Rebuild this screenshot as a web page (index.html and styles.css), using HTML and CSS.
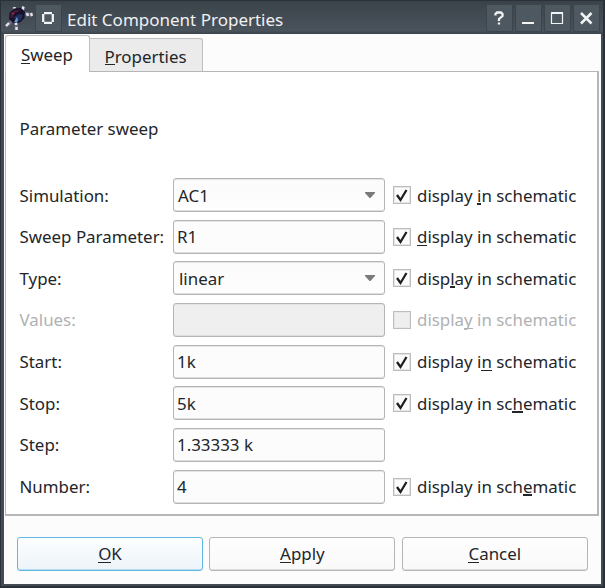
FILE: index.html
```html
<!DOCTYPE html>
<html lang="en">
<head>
<meta charset="utf-8">
<title>Edit Component Properties</title>
<link rel="stylesheet" href="styles.css">
</head>
<body>
<div class="window">
  <header class="titlebar">
    <svg class="app-icon" width="30" height="28" viewBox="0 0 30 28">
      <path d="M9 7 9.500 3M17 7l2-4M18 9l4 1 5 1M11 17l.5 9M7 16l-2 3-4 3" fill="none" stroke="#6e6880" stroke-width="3.400"/>
      <path d="M9.500 3v2M18.500 2.500l-1 3M22 9l1 3M26 9l1 3M11 19v2M11.500 23v3M4 19l-3 3" fill="none" stroke="#e6e2ee" stroke-width="2.400"/>
      <path d="M4.500 9 9 4.500l7-.5 4 4-.5 6-4.500 4.500-7 .5-4-4z" fill="#15122b"/>
      <path d="M6 9l4-3 6 0-7 4-1 4-3 0z" fill="#421937"/>
      <path d="M9 13l5-3 4 1-2 5-5 2z" fill="#22305e"/>
      <path d="M9 18l3-5 1 3-1 3z" fill="#6d92c4"/>
      <path d="M7 10l2-1" stroke="#a72643" stroke-width="1.500"/>
    </svg>
    <span class="tool"><svg width="27" height="28"><path d="M9 9.200h8M9 18.800h8M8.200 10v8M17.800 10v8" stroke="#f2f3f3" stroke-width="2.300" fill="none"/></svg></span>
    <h1>Edit Component Properties</h1>
    <div class="tools">
      <span class="tool"><svg width="27" height="28"><path d="M9.500 11.500V10l1.500-1.500h4L16.500 10v2L13 15v2M13 18.500v2" stroke="#f2f3f3" stroke-width="2.300" fill="none"/></svg></span>
      <span class="tool"><svg width="27" height="28"><path d="M7 19h12" stroke="#f2f3f3" stroke-width="2"/></svg></span>
      <span class="tool"><svg width="27" height="28"><path d="M7.500 9v11M18.500 9v11M7 19.500h12" stroke="#f2f3f3" stroke-width="1.200" fill="none"/><path d="M7 9h12" stroke="#f2f3f3" stroke-width="2"/></svg></span>
      <span class="tool"><svg width="27" height="28"><path d="M8 9 18.500 19.500M18.500 9 8 19.500" stroke="#f2f3f3" stroke-width="2.500"/></svg></span>
    </div>
  </header>
  <main class="content">
    <nav class="tabs">
      <div class="tab active"><span><u>S</u>weep</span></div>
      <div class="tab"><span><u>P</u>roperties</span></div>
    </nav>
    <section class="pane">
      <p class="heading">Parameter sweep</p>
      <div class="form">
        <label class="low">Simulation:</label>
        <div class="field combo editable low">AC1<svg class="arrow" width="10" height="6"><path d="M0 0h10v1L5.500 6h-1L0 1z"/></svg></div>
        <div class="check low"><span class="box"><svg width="18" height="18"><path d="M4 9 7.500 14 13.500 4"/></svg></span><span>display <u class="thick">i</u>n schematic</span></div>

        <label>Sweep Parameter:</label>
        <div class="field">R1</div>
        <div class="check"><span class="box"><svg width="18" height="18"><path d="M4 9 7.500 14 13.500 4"/></svg></span><span><u>d</u>isplay in schematic</span></div>

        <label class="low">Type:</label>
        <div class="field combo low">linear<svg class="arrow" width="10" height="6"><path d="M0 0h10v1L5.500 6h-1L0 1z"/></svg></div>
        <div class="check low"><span class="box"><svg width="18" height="18"><path d="M4 9 7.500 14 13.500 4"/></svg></span><span>disp<u class="thick">l</u>ay in schematic</span></div>

        <label class="off">Values:</label>
        <div class="field disabled"></div>
        <div class="check off"><span class="box"></span><span>displa<u>y</u> in schematic</span></div>

        <label>Start:</label>
        <div class="field">1k</div>
        <div class="check"><span class="box"><svg width="18" height="18"><path d="M4 9 7.500 14 13.500 4"/></svg></span><span>display i<u>n</u> schematic</span></div>

        <label class="low">Stop:</label>
        <div class="field low">5k</div>
        <div class="check low"><span class="box"><svg width="18" height="18"><path d="M4 9 7.500 14 13.500 4"/></svg></span><span>display in sc<u class="thick">h</u>ematic</span></div>

        <label>Step:</label>
        <div class="field">1.33333 k</div>
        <div></div>

        <label>Number:</label>
        <div class="field">4</div>
        <div class="check"><span class="box"><svg width="18" height="18"><path d="M4 9 7.500 14 13.500 4"/></svg></span><span>display in sch<u class="thick">e</u>matic</span></div>
      </div>
    </section>
    <footer class="buttons">
      <div class="button primary"><span><u>O</u>K</span></div>
      <div class="button"><span><u>A</u>pply</span></div>
      <div class="button"><span><u>C</u>ancel</span></div>
    </footer>
  </main>
</div>
</body>
</html>
```
FILE: styles.css
```css
* { box-sizing: border-box; }
body {
  margin: 0;
  font: 16.9px/24px "Noto Sans", sans-serif;
  color: #232629;
}
.window {
  width: 605px;
  height: 588px;
  padding: 0 2px 2px 3px;
  background: #434c54;
  border: 1px solid #2b3138;
  border-right-width: 2px;
  border-bottom-width: 2px;
  overflow: hidden;
  display: flex;
  flex-direction: column;
}
.titlebar {
  height: 33px;
  flex: none;
  display: flex;
  align-items: flex-start;
  padding-top: 3px;
  margin: 0 -2px 0 -3px;
  background: linear-gradient(#3b434a, #49535b 90%, #3b434a);
}
.app-icon { margin: 0 0 0 4px; }
.tool {
  width: 27px;
  height: 28px;
  border-radius: 2px;
  background: #4d5860;
  box-shadow: inset 0 0 0 1px #3c454c;
}
.tool svg { display: block; }
h1 {
  margin: 4px 0 0 5px;
  font-size: 17px;
  line-height: 24px;
  font-weight: 400;
  color: #f0f1f2;
  white-space: nowrap;
}
.tools { margin-left: auto; margin-right: 3px; display: flex; gap: 2px; }
.content {
  flex: 1;
  background: #fcfcfc;
  padding: 1px 2px 0 1px;
}
.tabs { display: flex; height: 36px; align-items: flex-end; }
.tab {
  height: 33px;
  width: 113px;
  padding: 6px 0 0 14.5px;
  background: #ebebeb;
  border: 1px solid #bdbebf;
  border-left: 0;
  border-bottom: 0;
  border-radius: 0 3px 0 0;
}
.tab:not(.active) u::after { bottom: 3px; }
.tab.active {
  position: relative;
  height: 37px;
  margin-bottom: -1px;
  width: 85px;
  padding: 7px 0 0 15px;
  background: #fff;
  border-left: 1px solid #bdbebf;
  border-radius: 3px 3px 0 0;
}
.pane {
  height: 445px;
  border: 1px solid #b5b6b7;
  border-right-width: 2px;
  border-bottom-width: 2px;
  background: #fff;
  padding: 45px 0 0 13.5px;
}
.heading { margin: 0 0 37px; }
.form {
  display: grid;
  grid-template-columns: 153.5px 220px 1fr;
  grid-template-rows: 42px 41px 42px 42px 41px 42px 42px 34px;
}
.form > * { height: 34px; }
label { padding-top: 5px; white-space: nowrap; }
.field {
  width: 212px;
  border: 1px solid #b4b5b6;
  border-radius: 3px;
  background: #fcfcfc;
  box-shadow: inset 0 1px #e4e4e4, inset 0 -1px #dedede;
  padding: 4px 3px 0;
}
.combo {
  display: flex;
  justify-content: space-between;
  padding-left: 5px;
  padding-right: 9px;
  background: linear-gradient(#fbfbfb, #fefefe);
}
.editable { padding-left: 4px; }
.arrow { margin-top: 8px; fill: #797a7c; }
.disabled { background: #efefef; }
.check { display: flex; padding-top: 5px; white-space: nowrap; }
.box {
  width: 18px;
  height: 18px;
  margin: 3px 6px 0 0;
  border: 1px solid #bcbdbe;
  background: #fcfcfc;
  box-shadow: inset 0 0 0 1px #e5e5e5;
}
.box svg { display: block; margin: -1px; fill: none; stroke: #1c1f22; stroke-width: 2.3; }
label.low, .check.low { padding-top: 6px; }
.field.low { padding-top: 5px; }
.low .box { margin-top: 2px; }
.off { color: #b0b1b2; }
.off .box { background: #efefef; }
u { position: relative; text-decoration: none; }
u::after {
  content: "";
  position: absolute;
  left: 0;
  right: 0;
  bottom: 2px;
  height: 1px;
  background: currentColor;
}
u.thick::after { height: 2px; }
.buttons {
  display: grid;
  grid-template-columns: repeat(3, 186px);
  column-gap: 6.4px;
  padding: 21px 0 0 12px;
}
.button {
  height: 34px;
  border: 1px solid #b4b5b6;
  border-radius: 3px;
  background: linear-gradient(#fefefe, #f9f9f9);
  box-shadow: inset 0 -1px #dedede;
  padding-top: 4px;
  text-align: center;
}
.primary {
  border-color: #62b6e2;
  background: linear-gradient(#fdfeff, #edf4f9);
  box-shadow: inset 0 -1px #b5dcf0;
}
```
